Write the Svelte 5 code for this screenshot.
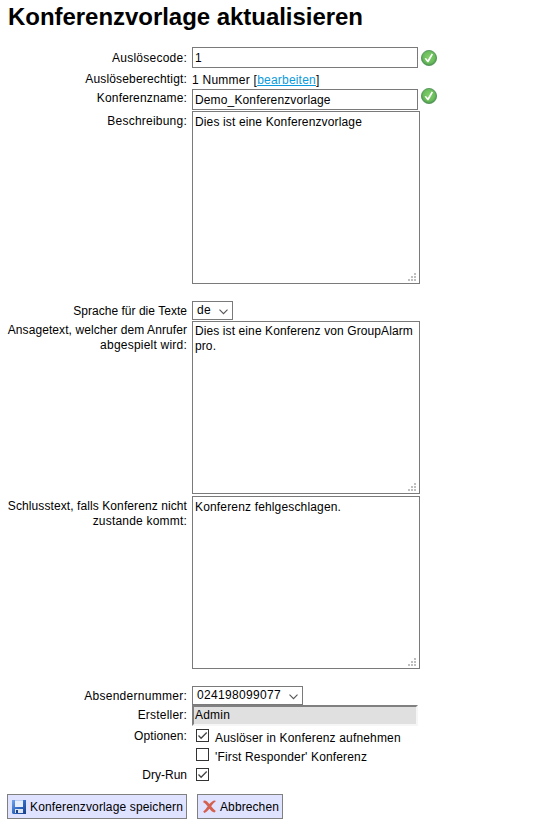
<script>
  const rows = [
    { label: ['Auslösecode:'], pad: 4, h: 23, kind: 'input', value: '1', ok: 3 },
    { label: ['Auslöseberechtigt:'], pad: 2, h: 19, kind: 'link' },
    { label: ['Konferenzname:'], pad: 2, h: 22, kind: 'input', value: 'Demo_Konferenzvorlage', ok: -1 },
    { label: ['Beschreibung:'], pad: 3, h: 190, kind: 'area', inset: 3, value: ['Dies ist eine Konferenzvorlage'] },
    { label: ['Sprache für die Texte'], pad: 3, h: 20, kind: 'select', value: 'de', w: 41 },
    { label: ['Ansagetext, welcher dem Anrufer', 'abgespielt wird:'], pad: 2, h: 175, kind: 'area', inset: 2, value: ['Dies ist eine Konferenz von GroupAlarm', 'pro.'] },
    { label: ['Schlusstext, falls Konferenz nicht', 'zustande kommt:'], pad: 3, h: 190, kind: 'area', inset: 3, value: ['Konferenz fehlgeschlagen.'] },
    { label: ['Absendernummer:'], pad: 3, h: 19, kind: 'select', value: '024198099077', w: 111 },
    { label: ['Ersteller:'], pad: 3, h: 22, kind: 'readonly', value: 'Admin' },
    { label: ['Optionen:'], pad: 2, h: 20, kind: 'check', value: 'Auslöser in Konferenz aufnehmen', on: true, boxTop: 2, textTop: 4 },
    { label: [''], pad: 2, h: 20, kind: 'check', value: "'First Responder' Konferenz", on: false, boxTop: 1, textTop: 3 },
    { label: ['Dry-Run'], pad: 1, h: 27, kind: 'check', value: '', on: true, boxTop: 1, textTop: 3 }
  ];
  // Letter spacing in px for each string, for the pixel-snapped form typeface.
  const tracking = {
    'Konferenzvorlage aktualisieren': -0.04,
    'Auslösecode:': 0.25,
    'Auslöseberechtigt:': 0.17,
    'Konferenzname:': 0.15,
    'Beschreibung:': 0.23,
    'Sprache für die Texte': 0.03,
    'Ansagetext, welcher dem Anrufer': 0.08,
    'abgespielt wird:': 0.22,
    'Schlusstext, falls Konferenz nicht': 0.09,
    'zustande kommt:': 0.2,
    'Absendernummer:': 0.27,
    'Ersteller:': 0.2,
    'Optionen:': 0.11,
    '1 Nummer [': 0.25,
    'bearbeiten': 0.2,
    'Demo_Konferenzvorlage': 0.14,
    'Dies ist eine Konferenzvorlage': 0.14,
    'Dies ist eine Konferenz von GroupAlarm': 0.1,
    'pro.': 0.1,
    'Konferenz fehlgeschlagen.': 0.16,
    '024198099077': 0.33,
    'Admin': 0.2,
    'de': 0.4,
    'Auslöser in Konferenz aufnehmen': 0.16,
    "'First Responder' Konferenz": 0.15,
    'Konferenzvorlage speichern': 0.14,
    'Abbrechen': 0.1
  };
  const grip = [[6, 0], [3, 3], [6, 3], [0, 6], [3, 6], [6, 6]];
</script>

{#snippet t(s)}<span style="letter-spacing: {tracking[s] ?? 0}px">{s}</span>{/snippet}

<main>
  <h1>{@render t('Konferenzvorlage aktualisieren')}</h1>
  {#each rows as r}
    <div class="row" style="height: {r.h}px">
      <div class="label" style="padding-top: {r.pad}px">
        {#each r.label as line}<div>{@render t(line)}</div>{/each}
      </div>
      {#if r.kind === 'input'}
        <div class="input">{@render t(r.value)}</div>
        <svg class="ok" style="margin-top: {r.ok}px" width="16" height="16" viewBox="0 0 16 16">
          <defs>
            <radialGradient id="g{r.ok + 1}" cx="50%" cy="45%" r="58%">
              <stop offset="0" stop-color="#83d16b" /><stop offset=".65" stop-color="#6abc5c" /><stop offset="1" stop-color="#438c4a" />
            </radialGradient>
          </defs>
          <circle cx="8" cy="8" r="7.6" fill="url(#g{r.ok + 1})" stroke="#4d8f54" stroke-width=".8" />
          <path d="M3.6 8.6 5 8 6.8 9.9 10.6 3.4 12.1 4.2 7.6 12.2 6.4 12.2Z" fill="#fff" />
        </svg>
      {:else if r.kind === 'link'}
        <div class="plain">{@render t('1 Nummer [')}<a href="#edit">{@render t('bearbeiten')}</a>]</div>
      {:else if r.kind === 'area'}
        <div class="area" style="padding-top: {r.inset}px">
          {#each r.value as line}<div>{@render t(line)}</div>{/each}
          <svg class="grip" width="8" height="8">
            {#each grip as [x, y]}<rect {x} {y} width="2" height="2" fill="#bfbfbf" />{/each}
          </svg>
        </div>
      {:else if r.kind === 'select'}
        <div class="select" style="width: {r.w}px">
          {@render t(r.value)}
          <svg width="9" height="6" viewBox="0 0 9 6"><path d="M.5 .7 4.5 4.7 8.5 .7" fill="none" stroke="#555" stroke-width="1.1" /></svg>
        </div>
      {:else if r.kind === 'readonly'}
        <div class="readonly">{@render t(r.value)}</div>
      {:else}
        <div class="check">
          <svg style="margin-top: {r.boxTop}px" width="13" height="13" viewBox="0 0 13 13">
            <rect x=".5" y=".5" width="12" height="12" fill="#fff" stroke="#333" />
            {#if r.on}<path d="M2.5 6.5 5.1 9.2 10.7 3.5" fill="none" stroke="#444" stroke-width="1.3" />{/if}
          </svg>
          <div class="option" style="padding-top: {r.textTop}px">{@render t(r.value)}</div>
        </div>
      {/if}
    </div>
  {/each}
  <div class="actions">
    <button class="save">
      <svg width="14" height="14" viewBox="0 0 14 14">
        <defs>
          <linearGradient id="disk" x1="0" y1="0" x2="1" y2="1"><stop offset="0" stop-color="#73a4ee" /><stop offset=".5" stop-color="#316ac5" /><stop offset="1" stop-color="#173c87" /></linearGradient>
        </defs>
        <path d="M0 0H14V14H1L0 13Z" fill="url(#disk)" />
        <path d="M3 0H11V7H3Z" fill="#e6eefb" />
        <path d="M3 0H11V1H3Z" fill="#b9cef0" />
        <path d="M3 9H11V13H3Z" fill="#dce4ee" />
        <path d="M4 10H6V13H4Z" fill="#1c4186" />
      </svg>
      <span class="caption">{@render t('Konferenzvorlage speichern')}</span>
    </button>
    <button class="cancel">
      <svg width="13" height="13" viewBox="0 0 13 13">
        <path d="M.8 .6C3 .2 4.6 1.8 6.4 4.1C8 2.2 10 .3 12.2 .5L12.7 1.6C10.6 2.9 9.3 4.6 8.2 6.2C9.6 7.9 11 9.6 12.8 10.9L11.6 12.6C9.3 12.3 7.8 10.7 6.4 8.8C5 10.6 3.4 12.5 1.3 12.9L.2 11.6C2.2 9.9 3.5 8.1 4.7 6.3C3.3 4.6 2 3.2 .2 2.2Z" fill="#d4604f" />
      </svg>
      <span class="caption">{@render t('Abbrechen')}</span>
    </button>
  </div>
</main>

<style>
  :global(body) { margin: 0; background: #fff; }
  main { width: 552px; height: 825px; overflow: hidden; box-sizing: border-box; font: 12px/15px "Liberation Sans", Arial, sans-serif; color: #000; white-space: nowrap; }
  h1 { margin: 0; padding: 2px 0 0 8px; height: 45px; font-size: 24px; line-height: 30px; font-weight: 700; }
  .row { display: flex; align-items: flex-start; }
  .label { width: 187px; margin-right: 5px; flex: none; box-sizing: border-box; text-align: right; }
  .input, .area, .select { box-sizing: border-box; border: 1px solid #7a7a7a; background: #fff; }
  .input { width: 226px; height: 21px; padding: 3px 2px 0; }
  .ok { margin-left: 3px; flex: none; }
  .plain { padding-top: 3px; }
  a { color: #0b9bdc; text-decoration: underline; }
  .area { position: relative; width: 228px; height: 173px; padding: 0 2px; }
  .grip { position: absolute; right: 3px; bottom: 2px; }
  .select { display: flex; justify-content: space-between; height: 19px; padding: 1px 4px 0 4px; }
  .select svg { margin-top: 6px; }
  .readonly { box-sizing: border-box; width: 226px; height: 21px; padding: 1px 1px 0; background: #e0e0e0; border: 2px solid; border-color: #808080 #f6f6f6 #f6f6f6 #808080; }
  .check { display: flex; padding-left: 4px; }
  .option { padding-left: 6px; }
  .actions { display: flex; gap: 10px; padding-left: 7px; }
  button { display: flex; align-items: center; box-sizing: border-box; height: 25px; margin: 0; border: 1px solid #808080; border-radius: 0; background: #dfe3ff; color: #000; font: inherit; white-space: nowrap; }
  .caption { padding-top: 1px; }
  .save { width: 180px; padding: 0 0 0 4px; gap: 4px; }
  .cancel { width: 86px; padding: 0 0 0 5px; gap: 4px; }
</style>
